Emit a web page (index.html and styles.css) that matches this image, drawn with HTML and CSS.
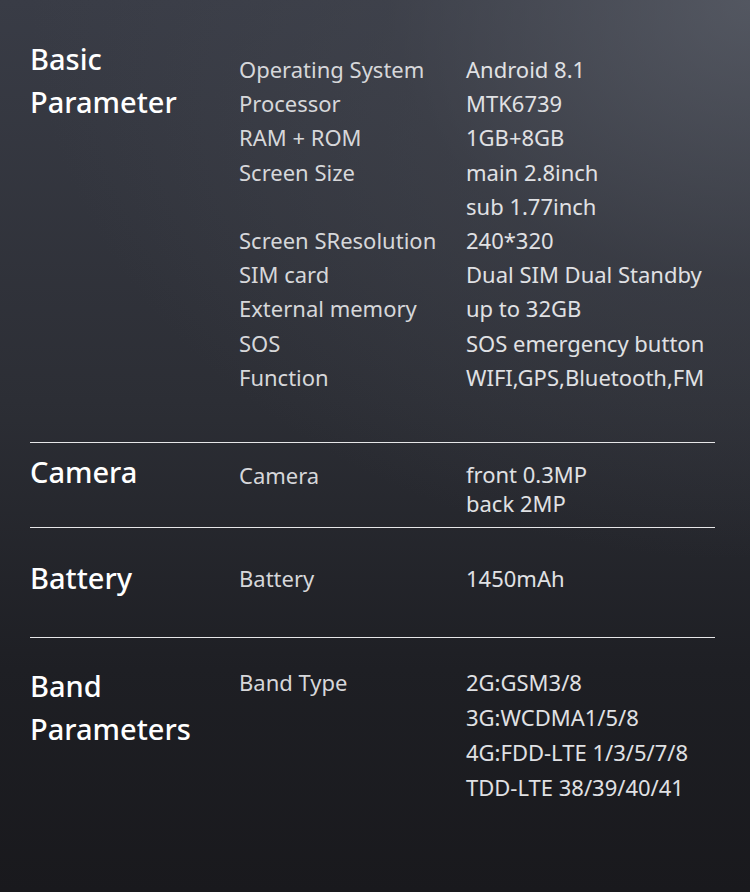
FILE: index.html
```html
<!DOCTYPE html>
<html>
<head>
<meta charset="utf-8">
<link rel="stylesheet" href="styles.css">
</head>
<body>
<div class="page">
  <section class="spec spec-basic">
    <h2 class="title">Basic<br>Parameter</h2>
    <div class="labels">
      <div>Operating System</div>
      <div>Processor</div>
      <div>RAM + ROM</div>
      <div>Screen Size</div>
      <div>&nbsp;</div>
      <div>Screen SResolution</div>
      <div>SIM card</div>
      <div>External memory</div>
      <div>SOS</div>
      <div>Function</div>
    </div>
    <div class="values">
      <div>Android 8.1</div>
      <div>MTK6739</div>
      <div>1GB+8GB</div>
      <div>main 2.8inch</div>
      <div>sub 1.77inch</div>
      <div>240*320</div>
      <div>Dual SIM Dual Standby</div>
      <div>up to 32GB</div>
      <div>SOS emergency button</div>
      <div>WIFI,GPS,Bluetooth,FM</div>
    </div>
  </section>
  <section class="spec spec-camera">
    <h2 class="title">Camera</h2>
    <div class="labels"><div>Camera</div></div>
    <div class="values tight">
      <div>front 0.3MP</div>
      <div>back 2MP</div>
    </div>
  </section>
  <section class="spec spec-battery">
    <h2 class="title">Battery</h2>
    <div class="labels"><div>Battery</div></div>
    <div class="values"><div>1450mAh</div></div>
  </section>
  <section class="spec spec-band">
    <h2 class="title">Band<br>Parameters</h2>
    <div class="labels"><div>Band Type</div></div>
    <div class="values loose">
      <div>2G:GSM3/8</div>
      <div>3G:WCDMA1/5/8</div>
      <div>4G:FDD-LTE 1/3/5/7/8</div>
      <div>TDD-LTE 38/39/40/41</div>
    </div>
  </section>
</div>
</body>
</html>
```
FILE: styles.css
```css
html, body {
  margin: 0;
  padding: 0;
}
body {
  width: 750px;
  height: 892px;
  overflow: hidden;
  background:
    radial-gradient(ellipse 900px 700px at 100% 0%, rgba(92,96,106,0.75) 0%, rgba(70,73,82,0.4) 40%, rgba(40,42,48,0) 80%),
    linear-gradient(180deg, #393c46 0%, #2c2e35 45%, #1e1f24 75%, #19191d 100%);
  font-family: "Noto Sans", "Open Sans", sans-serif;
  color: #d6d7da;
}
.page {
  padding: 0 35px 0 30px;
}
.spec {
  display: grid;
  grid-template-columns: 209px 227px 1fr;
  align-items: start;
  border-bottom: 1px solid #e6e6e8;
}
.spec-band {
  border-bottom: none;
}
.title {
  margin: 0;
  font-size: 29px;
  font-weight: 500;
  line-height: 43px;
  color: #ffffff;
}
.labels, .values {
  font-size: 22px;
  line-height: 34.2px;
  white-space: nowrap;
}
.values {
  color: #e0e1e4;
}
.tight {
  line-height: 29px;
}
.loose {
  line-height: 35px;
}
.spec-basic {
  padding-top: 37px;
  padding-bottom: 48px;
}
.spec-basic .labels,
.spec-basic .values {
  margin-top: 15px;
}
.spec-camera {
  padding-top: 7px;
  padding-bottom: 9px;
}
.spec-camera .labels { margin-top: 8px; }
.spec-camera .values { margin-top: 10px; }
.spec-battery {
  padding-top: 28px;
  padding-bottom: 38px;
}
.spec-battery .labels,
.spec-battery .values {
  margin-top: 5px;
}
.spec-band {
  padding-top: 26px;
}
.spec-band .labels,
.spec-band .values {
  margin-top: 1px;
}
```
